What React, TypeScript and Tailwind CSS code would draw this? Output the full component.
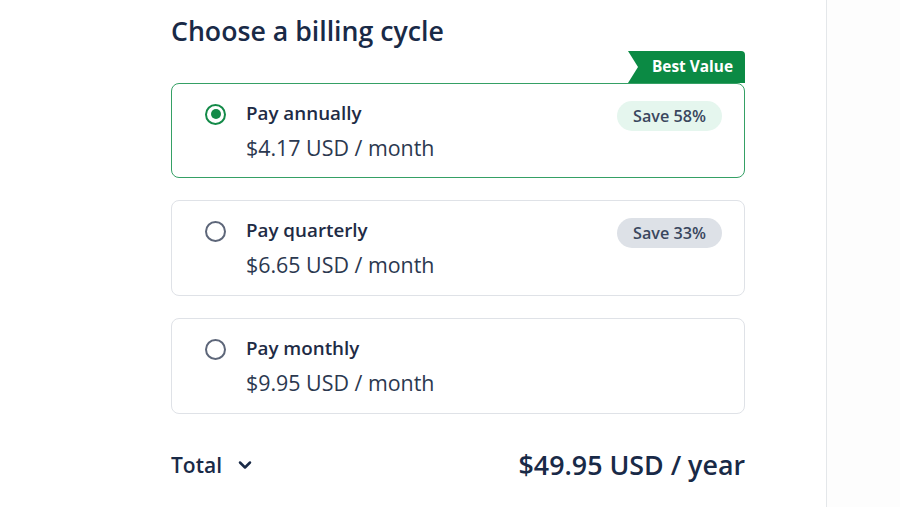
import { ChevronDown } from 'lucide-react';

type Plan = {
  id: string;
  label: string;
  price: string;
  save?: string;
  selected?: boolean;
};

const plans: Plan[] = [
  { id: 'annual', label: 'Pay annually', price: '$4.17 USD / month', save: 'Save 58%', selected: true },
  { id: 'quarterly', label: 'Pay quarterly', price: '$6.65 USD / month', save: 'Save 33%' },
  { id: 'monthly', label: 'Pay monthly', price: '$9.95 USD / month' },
];

function Radio({ checked }: { checked?: boolean }) {
  if (checked) {
    return (
      <span className="mt-[3px] flex h-[21px] w-[21px] shrink-0 items-center justify-center rounded-full border-[2.5px] border-[#138a48]">
        <span className="h-[10px] w-[10px] rounded-full bg-[#138a48]" />
      </span>
    );
  }
  return <span className="mt-[3px] h-[21px] w-[21px] shrink-0 rounded-full border-2 border-[#5d6679]" />;
}

function PlanCard({ plan }: { plan: Plan }) {
  return (
    <div
      className={
        plan.selected
          ? 'flex h-[95px] items-start rounded-lg border-[1.5px] border-[#35a065] pl-[33px] pr-[22px] pt-[16.5px]'
          : 'flex h-[96px] items-start rounded-lg border border-[#dfe2e7] pl-[33px] pr-[22px] pt-[17px]'
      }
    >
      <Radio checked={plan.selected} />
      <div className="ml-[20px] flex-1">
        <div className="text-[18.8px] font-semibold leading-6 text-[#1e2b45]">{plan.label}</div>
        <div className="mt-[9px] text-[21.4px] leading-7 text-[#2b384f]">{plan.price}</div>
      </div>
      {plan.save && (
        <span
          className={
            plan.selected
              ? 'rounded-full bg-[#e5f6ee] px-4 py-[5px] text-[16.2px] font-semibold leading-5 text-[#3a475e]'
              : 'rounded-full bg-[#dde1e7] px-4 py-[5px] text-[16.2px] font-semibold leading-5 text-[#3a475e]'
          }
        >
          {plan.save}
        </span>
      )}
    </div>
  );
}

export default function App() {
  return (
    <div className="flex h-[507px] w-[900px] bg-white font-['Open_Sans',sans-serif] text-[#192a47]">
      <div className="w-[827px] shrink-0 border-r border-[#e4e7ea]">
        <div className="ml-[171px] w-[574px]">
          <h1 className="pt-[13px] text-[26.7px] font-semibold leading-9 text-[#192a47]">Choose a billing cycle</h1>

          {/* Best value ribbon */}
          <div className="mt-[2px] flex justify-end">
            <div className="overflow-hidden rounded-tr-[4px]">
              <div className="flex h-[32px] w-[117px] items-center justify-end bg-[#0b8a44] pr-[12px] text-[15.4px] font-bold text-white [clip-path:polygon(0_0,100%_0,100%_100%,0_100%,10px_50%)]">
                Best Value
              </div>
            </div>
          </div>

          <div className="flex flex-col gap-[22px]">
            {plans.map((p) => (
              <PlanCard key={p.id} plan={p} />
            ))}
          </div>

          <div className="mt-[35px] flex items-center justify-between">
            <button className="flex items-center gap-[13px] text-[21px] font-semibold leading-[30px] text-[#192a47]">
              Total
              <ChevronDown className="h-5 w-5" strokeWidth={3} />
            </button>
            <div className="text-[26.8px] font-semibold leading-8 text-[#192a47]">$49.95 USD / year</div>
          </div>
        </div>
      </div>
      <div className="flex-1 bg-[#fdfdfd]" />
    </div>
  );
}
